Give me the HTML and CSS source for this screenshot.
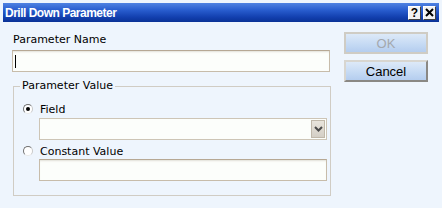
FILE: index.html
```html
<!DOCTYPE html>
<html>
<head>
<meta charset="utf-8">
<link rel="stylesheet" href="styles.css">
</head>
<body>
<div class="window">
  <div class="titlebar">
    <span class="title">Drill Down Parameter</span>
    <div class="tbtns">
      <span class="tbtn">?</span>
      <span class="tbtn close">
        <svg width="9" height="9" viewBox="0 0 9 9"><path d="M1 1 L8 8 M8 1 L1 8" stroke="#000" stroke-width="2" fill="none"/></svg>
      </span>
    </div>
  </div>
  <div class="content">
    <div class="main">
      <div class="label">Parameter Name</div>
      <div class="input"><span class="caret"></span></div>
      <fieldset class="group">
        <legend>Parameter Value</legend>
        <div class="radio-row first">
          <span class="radio"><span class="dot"></span></span>
          <span>Field</span>
        </div>
        <div class="select input sub">
          <span class="drop">
            <svg width="9" height="6" viewBox="0 0 9 6"><path d="M1 1 L4.5 4.5 L8 1" stroke="#4a4a4a" stroke-width="2" fill="none"/></svg>
          </span>
        </div>
        <div class="radio-row second">
          <span class="radio"></span>
          <span>Constant Value</span>
        </div>
        <div class="input sub"></div>
      </fieldset>
    </div>
    <div class="side">
      <div class="btn disabled">OK</div>
      <div class="btn">Cancel</div>
    </div>
  </div>
</div>
</body>
</html>
```
FILE: styles.css
```css
html, body {
  margin: 0;
  padding: 0;
  background: #eef5fd;
}
body {
  font-family: "DejaVu Sans", Verdana, sans-serif;
  font-size: 11px;
  color: #000;
}
.window {
  width: 442px;
  height: 208px;
  padding: 3px 3px 0;
  box-sizing: border-box;
}
.titlebar {
  height: 19px;
  background: linear-gradient(to bottom, #4f82e2 0%, #2a5fd0 35%, #123fae 75%, #0a3296 100%);
  display: flex;
  align-items: center;
  justify-content: space-between;
  padding: 0 3px 0 2px;
}
.title {
  color: #fff;
  font-weight: bold;
  font-size: 12px;
  letter-spacing: -0.5px;
  font-family: "Liberation Sans", Arial, sans-serif;
}
.tbtns {
  display: flex;
  gap: 2px;
}
.tbtn {
  width: 13px;
  height: 14px;
  background: #f2f2f2;
  border: 1px solid;
  border-color: #fff #404040 #404040 #fff;
  box-sizing: border-box;
  display: flex;
  align-items: center;
  justify-content: center;
  font-weight: bold;
  font-size: 12px;
  line-height: 1;
  font-family: "Liberation Sans", Arial, sans-serif;
}
.content {
  display: flex;
  padding: 11px 0 0 9px;
}
.main {
  width: 318px;
}
.label {
  line-height: 14px;
  height: 14px;
  margin-bottom: 3px;
  padding-left: 1px;
}
.input {
  height: 22px;
  box-sizing: border-box;
  border: 1px solid #c7bcaa;
  border-top-color: #b6a894;
  background: #fcfefb;
  box-shadow: inset 0 2px 2px -1px #e2e0d8;
  position: relative;
}
.caret {
  display: block;
  width: 1px;
  height: 13px;
  background: #000;
  margin: 4px 0 0 2px;
}
.group {
  margin: 7px 0 0 1px;
  padding: 0 3px 14px 9px;
  border: 1px solid #d0ccc4;
  width: 318px;
  box-sizing: border-box;
}
.group legend {
  padding: 0 2px;
  margin-left: -3px;
  line-height: 14px;
}
.radio-row {
  display: flex;
  align-items: center;
  height: 14px;
  gap: 7px;
}
.radio-row.first {
  margin-top: 9px;
  margin-bottom: 2px;
}
.radio-row.second {
  margin-top: 4px;
  margin-bottom: 1px;
}
.sub {
  margin-left: 16px;
}
.radio {
  width: 10px;
  height: 10px;
  border-radius: 50%;
  box-sizing: border-box;
  border: 1px solid #8c8c8c;
  border-color: #707070 #c8c8c8 #e8e8e8 #707070;
  background: #fff;
  display: flex;
  align-items: center;
  justify-content: center;
}
.dot {
  width: 4px;
  height: 4px;
  border-radius: 50%;
  background: #000;
}
.select {
  border-color: #cdc5b6;
  box-shadow: none;
}
.drop {
  position: absolute;
  right: 1px;
  top: 1px;
  width: 14px;
  height: 18px;
  box-sizing: border-box;
  background: linear-gradient(to bottom, #e8e4dc, #d4cfc6);
  border: 1px solid #c0b8aa;
  display: flex;
  align-items: center;
  justify-content: center;
}
.side {
  margin-left: 14px;
  margin-top: -1px;
  display: flex;
  flex-direction: column;
  gap: 6px;
}
.btn {
  width: 84px;
  height: 22px;
  box-sizing: border-box;
  border: 2px solid;
  border-color: #d8d6d0 #8a8884 #8a8884 #d8d6d0;
  background: linear-gradient(to bottom, #dde9f8 0%, #c8dcf4 50%, #b4cdef 100%);
  display: flex;
  align-items: center;
  justify-content: center;
  font-family: "Liberation Sans", Arial, sans-serif;
  font-size: 13px;
}
.btn.disabled {
  border-color: #cfccc4;
  color: #a4a8ae;
}
```
